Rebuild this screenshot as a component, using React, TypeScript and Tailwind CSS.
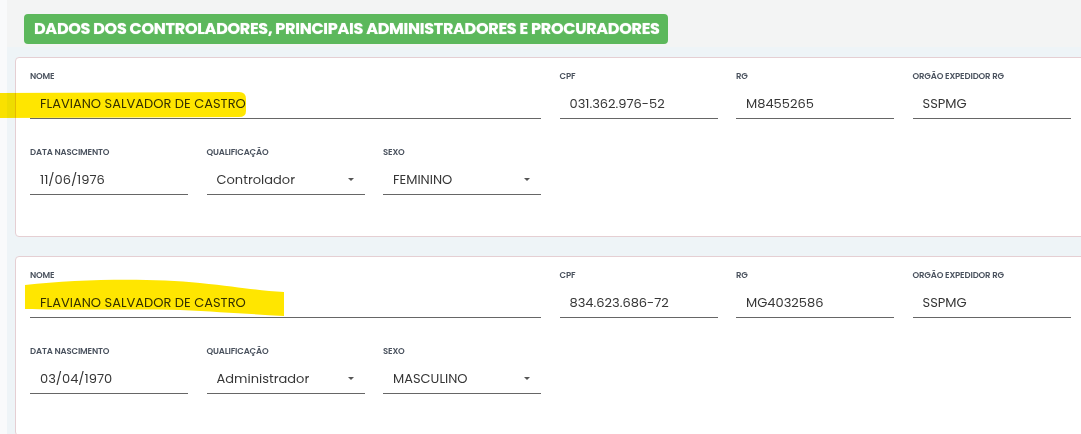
const font = "font-['Poppins','Inter','Noto_Sans',sans-serif]"

type Field = { label: string; value: string; span?: number; select?: boolean }

function FieldBox({ label, value, span, select }: Field) {
  return (
    <div className={span === 3 ? "col-span-3" : "col-span-1"}>
      <div className="h-[12px] text-[8.5px] font-semibold uppercase leading-[12px] tracking-[-0.15px] text-[#4a525e]">{label}</div>
      <div className="mt-[5px] flex h-[32px] items-center justify-between border-b border-[#666] pt-[3px] pl-[10px] pr-[11px] text-[13px] text-[#363636]">
        <span>{value}</span>
        {select ? (
          <svg width="6" height="3" viewBox="0 0 6 3" className="-mt-[2px]">
            <path d="M0 0 L6 0 L3 3 Z" fill="#555" />
          </svg>
        ) : null}
      </div>
    </div>
  )
}

function PersonCard({ fields }: { fields: Field[][] }) {
  return (
    <div className="w-[1090px] shrink-0 rounded-[4px] border border-[#e5cfd3] bg-white px-[14px] pt-[12px] pb-[41px]">
      <div className="grid grid-cols-[repeat(6,158px)] gap-x-[18.5px] gap-y-[27px]">
        {fields[0].map((f) => (
          <FieldBox key={f.label} {...f} />
        ))}
        {fields[1].map((f) => (
          <FieldBox key={f.label} {...f} />
        ))}
      </div>
    </div>
  )
}

const people: Field[][][] = [
  [
    [
      { label: "Nome", value: "FLAVIANO SALVADOR DE CASTRO", span: 3 },
      { label: "CPF", value: "031.362.976-52" },
      { label: "RG", value: "M8455265" },
      { label: "Orgão Expedidor RG", value: "SSPMG" },
    ],
    [
      { label: "Data Nascimento", value: "11/06/1976" },
      { label: "Qualificação", value: "Controlador", select: true },
      { label: "Sexo", value: "FEMININO", select: true },
    ],
  ],
  [
    [
      { label: "Nome", value: "FLAVIANO SALVADOR DE CASTRO", span: 3 },
      { label: "CPF", value: "834.623.686-72" },
      { label: "RG", value: "MG4032586" },
      { label: "Orgão Expedidor RG", value: "SSPMG" },
    ],
    [
      { label: "Data Nascimento", value: "03/04/1970" },
      { label: "Qualificação", value: "Administrador", select: true },
      { label: "Sexo", value: "MASCULINO", select: true },
    ],
  ],
]

export default function App() {
  return (
    <div className={`relative flex h-[434px] w-[1081px] overflow-hidden bg-[#eef4f7] ${font}`}>
      <div className="w-[7px] shrink-0 bg-[#f9fafb]" />
      <div className="flex flex-col">
        <div className="bg-[#f3f4f4] pl-[17px] pt-[14px] pb-[3px]">
          <div className="flex h-[30px] w-[644px] items-center rounded-[4px] bg-[#5cb85c] pl-[10px] text-[16px] font-bold tracking-[-0.27px] text-white [text-shadow:0_0_1px_rgba(255,255,255,0.6)]">
            DADOS DOS CONTROLADORES, PRINCIPAIS ADMINISTRADORES E PROCURADORES
          </div>
        </div>
        <div className="flex flex-col gap-[19px] pl-[8px] pt-[10px]">
          {people.map((p, i) => (
            <PersonCard key={i} fields={p} />
          ))}
        </div>
      </div>
      {/* marker highlights drawn over the names */}
      <svg className="pointer-events-none absolute left-0 top-0 mix-blend-multiply" width="1081" height="434" viewBox="0 0 1081 434">
        <path d="M0 93 L239 92 Q246 92 246 99 L246 111 Q246 117 239 117 L0 118 Z" fill="#ffe600" />
        <path d="M25 285 C80 279 150 278 200 283 C240 287 260 291 284 292 L284 316 C250 314 220 312 180 310 C120 309 60 310 25 309 Z" fill="#ffe600" />
      </svg>
    </div>
  )
}
